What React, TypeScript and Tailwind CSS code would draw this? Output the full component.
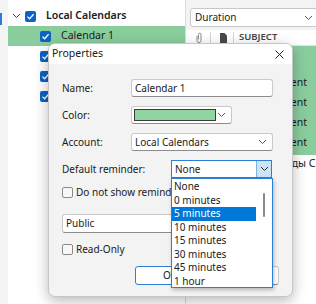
import React from "react"

const Check = () => (
  <span className="w-[11px] h-[11px] rounded-[2px] bg-[#0c63c4] flex items-center justify-center shrink-0">
    <svg width="9" height="9" viewBox="0 0 9 9">
      <path d="M1.5 4.6 L3.6 6.7 L7.6 2.2" fill="none" stroke="white" strokeWidth="1.3" />
    </svg>
  </span>
)

const Box = () => (
  <span className="w-[11px] h-[11px] rounded-[2px] border border-[#8a8a8a] bg-[#f7f7f7] shrink-0" />
)

const Chevron = ({ color = "#555" }: { color?: string }) => (
  <svg width="9" height="6" viewBox="0 0 9 6">
    <path d="M1 1 L4.5 4.5 L8 1" fill="none" stroke={color} strokeWidth="1" />
  </svg>
)

const reminders = ["None", "0 minutes", "5 minutes", "10 minutes", "15 minutes", "30 minutes", "45 minutes", "1 hour"]

export default function App() {
  return (
    <div className="relative w-[316px] h-[304px] overflow-hidden flex bg-white text-[10px] text-[#1a1a1a] font-['Noto_Sans',sans-serif]">
      {/* Left folder pane */}
      <div className="relative w-[186px] shrink-0 h-full flex border-r border-[#dcdcdc]">
        <div className="w-[8px] h-full bg-[#f4f4f4] flex flex-col">
          <div className="mt-[13px] w-[2px] h-[12px] bg-[#2a7bd6]" />
        </div>
        <div className="flex-1 flex flex-col pt-[6px]">
          <div className="h-[20px] flex items-center">
            <span className="w-[4px]" />
            <Chevron color="#444" />
            <span className="w-[4px]" />
            <Check />
            <span className="ml-[10px] font-semibold text-[10.5px]">Local Calendars</span>
          </div>
          <div className="h-[20px] flex items-center bg-[#8acd9d] pl-[32px]">
            <Check />
            <span className="ml-[10px] text-[10.5px]">Calendar 1</span>
          </div>
          {[0, 1, 2].map((i) => (
            <div key={i} className="h-[20px] flex items-center pl-[32px]">
              <Check />
              <span className="ml-[10px] text-[10.5px]">Calendar</span>
            </div>
          ))}
        </div>
      </div>

      {/* Right list pane */}
      <div className="w-[130px] shrink-0 flex flex-col bg-white">
        <div className="h-[30px] bg-[#f3f3f3] pt-[8px] pl-[4px]">
          <div className="h-[19px] w-[130px] bg-white border border-[#c8c8c8] rounded-[3px] flex items-center justify-between pl-[4px] pr-[6px]">
            <span>Duration</span>
            <Chevron />
          </div>
        </div>
        <div className="h-[16px] flex items-center text-[#555] border-b border-[#e4e4e4]">
          <span className="w-[10px]" />
          <svg width="6" height="11" viewBox="0 0 6 11">
            <path d="M1 4 V8.5 A2 2 0 0 0 5 8.5 V2.5 A1.3 1.3 0 0 0 2.4 2.5 V7.5" fill="none" stroke="#8a8a8a" strokeWidth="1" />
          </svg>
          <span className="ml-[8px] w-px h-[12px] bg-[#d6d6d6]" />
          <svg className="ml-[9px]" width="7" height="10" viewBox="0 0 7 10">
            <path d="M0 0 H4.5 L7 2.5 V10 H0 Z" fill="#4a4a4a" />
          </svg>
          <span className="ml-[6px] w-px h-[12px] bg-[#d6d6d6]" />
          <span className="ml-[5px] font-semibold text-[9.5px] text-[#444]">SUBJECT</span>
        </div>
        <div className="h-[109px] bg-[#8acd9d] flex flex-col pt-[27px]">
          {[0, 1, 2, 3].map((i) => (
            <div key={i} className="h-[20px] flex items-center justify-end pr-[9px] whitespace-nowrap text-[10.5px]">
              Event
            </div>
          ))}
        </div>
        <div className="h-[18px] flex items-center pl-[95px] whitespace-nowrap text-[10.5px]">годы Сводка</div>
      </div>

      {/* Properties dialog */}
      <div className="absolute left-[48px] top-[43px] w-[245px] h-[254px] rounded-[7px] border border-[#c6c6c6] bg-[#f3f3f3] overflow-hidden shadow-[0_4px_14px_rgba(0,0,0,0.28)] flex flex-col">
        <div className="h-[20px] bg-white flex items-center justify-between pl-[3px] pr-[8px]">
          <span className="text-[10.5px]">Properties</span>
          <svg width="9" height="9" viewBox="0 0 9 9">
            <path d="M0.5 0.5 L8.5 8.5 M8.5 0.5 L0.5 8.5" stroke="#222" strokeWidth="1" />
          </svg>
        </div>
        <div className="flex flex-col pt-[15px] pl-[13px]">
          <div className="h-[18px] flex items-center">
            <span className="w-[69px]">Name:</span>
            <div className="w-[142px] h-[18px] bg-white border border-[#c9c9c9] border-b-[#8c8c8c] rounded-[3px] flex items-center pl-[3px]">
              Calendar 1
            </div>
          </div>
          <div className="mt-[9px] h-[18px] flex items-center">
            <span className="w-[69px]">Color:</span>
            <div className="w-[101px] h-[18px] bg-white border border-[#c9c9c9] border-b-[#8c8c8c] rounded-[3px] flex items-center pl-[2px] pr-[5px] justify-between">
              <span className="w-[82px] h-[12px] bg-[#8fd4a1] border border-[#3a3a3a]" />
              <Chevron />
            </div>
          </div>
          <div className="mt-[9px] h-[18px] flex items-center">
            <span className="w-[69px]">Account:</span>
            <div className="w-[142px] h-[18px] bg-white border border-[#c9c9c9] border-b-[#8c8c8c] rounded-[3px] flex items-center pl-[3px] pr-[5px] justify-between">
              <span>Local Calendars</span>
              <Chevron />
            </div>
          </div>
          <div className="mt-[9px] h-[18px] flex items-center">
            <span className="w-[109px]">Default reminder:</span>
            <div className="w-[101px] h-[18px] bg-white border border-[#2b7fd4] flex items-center pl-[3px] justify-between">
              <span>None</span>
              <span className="w-[15px] h-full bg-[#cce4f7] border-l border-[#7ab4e6] flex items-center justify-center">
                <Chevron color="#333" />
              </span>
            </div>
          </div>
          <div className="mt-[9px] h-[11px] flex items-center whitespace-nowrap">
            <Box />
            <span className="ml-[3px]">Do not show reminders</span>
          </div>
          <div className="mt-[16px] w-[211px] h-[19px] bg-white border border-[#c9c9c9] border-b-[#8c8c8c] rounded-[3px] flex items-center pl-[3px]">
            Public
          </div>
          <div className="mt-[11px] h-[11px] flex items-center">
            <Box />
            <span className="ml-[3px]">Read-Only</span>
          </div>
          <div className="mt-[11px] ml-[73px] flex gap-[4px]">
            <div className="w-[70px] h-[19px] bg-white border-[1.5px] border-[#2b7fd4] rounded-[3px] flex items-center justify-center">OK</div>
            <div className="w-[70px] h-[19px] bg-white border border-[#c9c9c9] border-b-[#8c8c8c] rounded-[3px] flex items-center justify-center">Cancel</div>
          </div>
        </div>
      </div>

      {/* Open reminder list */}
      <div className="absolute left-[171px] top-[178px] w-[102px] h-[110px] bg-white border border-[#2b7fd4] shadow-[1px_2px_4px_rgba(0,0,0,0.25)] flex">
        <div className="flex-1 flex flex-col pt-[1px]">
          {reminders.map((r) => (
            <div
              key={r}
              className={r === "5 minutes" ? "h-[13.5px] leading-[13.5px] pl-[2px] bg-[#0078d7] text-white" : "h-[13.5px] leading-[13.5px] pl-[2px]"}
            >
              {r}
            </div>
          ))}
        </div>
        <div className="w-[16px] flex justify-center pt-[14px]">
          <span className="w-[2px] h-[24px] rounded-full bg-[#8a8a8a]" />
        </div>
      </div>
    </div>
  )
}
